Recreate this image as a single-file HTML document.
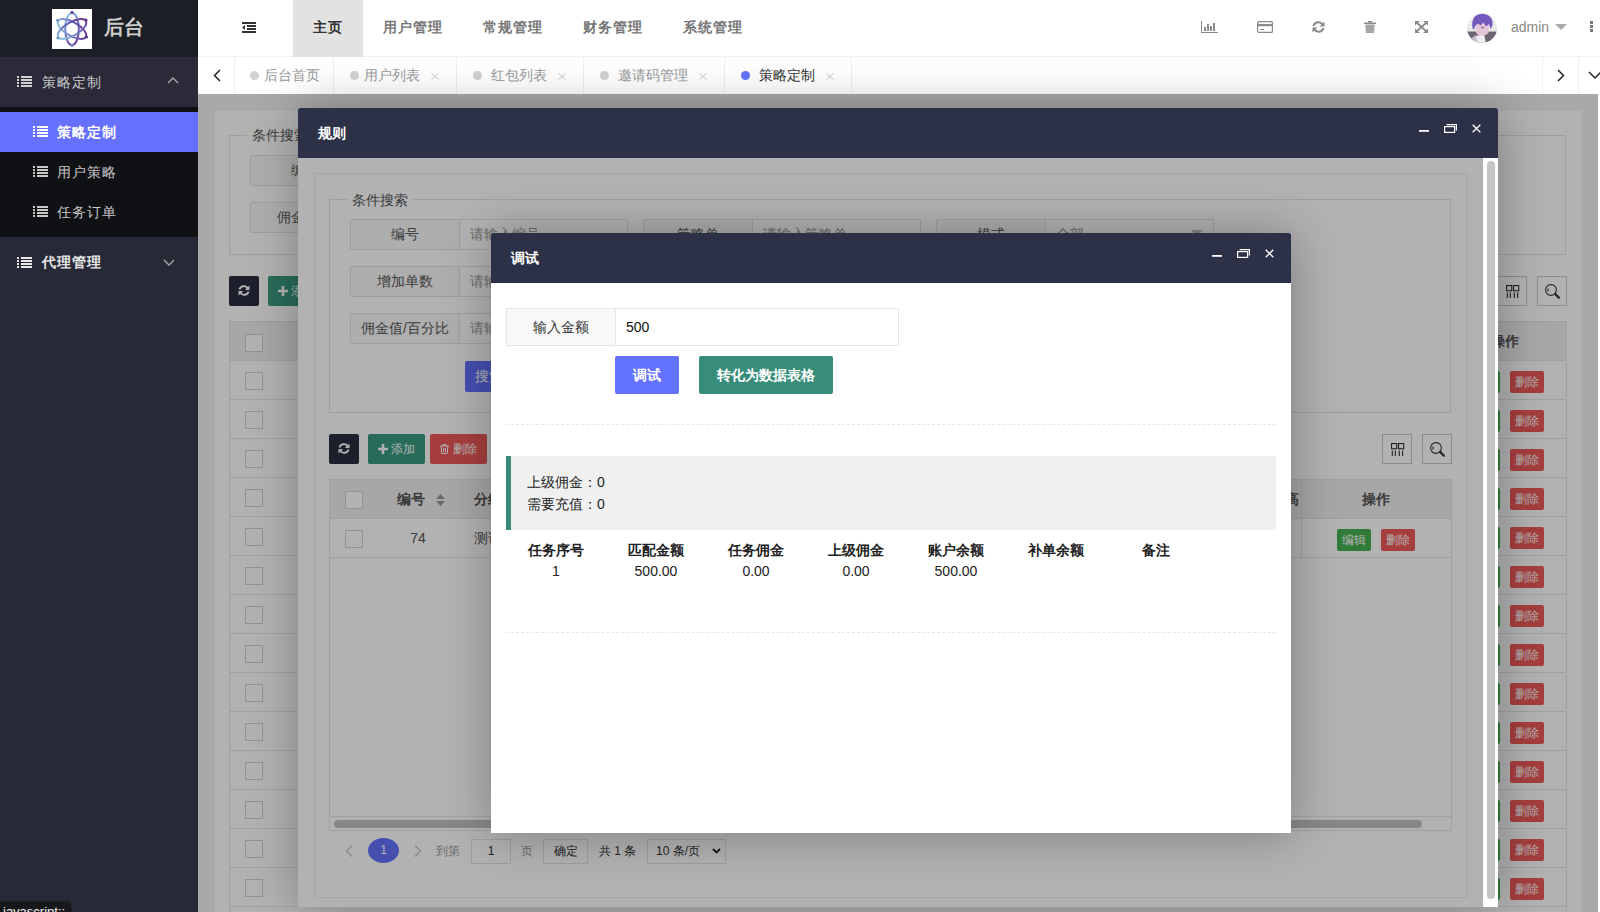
<!DOCTYPE html><html><head><meta charset="utf-8"><style>
*{box-sizing:border-box;margin:0;padding:0}
html,body{width:1600px;height:912px;overflow:hidden;background:#fff;font-family:"Liberation Sans",sans-serif;font-size:14px;color:#333}
.a{position:absolute}
#side{position:absolute;left:0;top:0;width:198px;height:912px;background:#282936}
#logo{position:absolute;left:0;top:0;width:198px;height:57px;background:#1c1e26}
#logo .box{position:absolute;left:52px;top:9px;width:40px;height:40px;background:#fff}
#logo .t{position:absolute;left:104px;top:14px;font-size:20px;line-height:26px;font-weight:900;color:#cdcdcd;letter-spacing:0px}
.mi{position:absolute;left:0;width:198px;color:#c4c4c4;font-size:14px;letter-spacing:1px}
.mi span{position:absolute;top:0}
.lic{position:absolute;width:15px;height:11px}
.lic i{position:absolute;left:0;height:2px;width:2px;background:currentColor}
.lic b{position:absolute;left:4px;height:2px;width:11px;background:currentColor}
#hdr{position:absolute;left:198px;top:0;width:1402px;height:57px;background:#fff;border-bottom:1px solid #f2f2f2}
.nav{position:absolute;top:0;height:57px;line-height:55px;font-size:14px;letter-spacing:1px;color:#777;font-weight:bold;text-align:center}
#tabs{position:absolute;left:198px;top:57px;width:1402px;height:37px;background:#fff}
.tab{position:absolute;top:0;height:37px;line-height:37px;border-right:1px solid #f0f0f0;color:#999;font-size:14px}
.tab .d{position:absolute;top:14px;width:9px;height:9px;border-radius:50%;background:#d2d2d2}
.tab .tx{position:absolute;top:0}
.tab .x{position:absolute;top:0;font-size:13px;color:#c8c8c8}
#main{position:absolute;left:198px;top:94px;width:1400px;height:818px;background:#f2f2f2;overflow:hidden}
.shade{position:absolute;left:0;top:0;right:0;bottom:0;background:rgba(0,0,0,.3)}
.card{position:absolute;background:#fff;border:1px solid #ececec;border-radius:2px}
.fs{position:absolute;border:1px solid #e2e2e2}
.lg{position:absolute;background:#fff;padding:0 5px;font-size:14px;color:#555;line-height:20px}
.lb{position:absolute;height:31px;border:1px solid #e2e2e2;background:#fafafa;line-height:29px;text-align:center;color:#555;border-radius:2px 0 0 2px}
.ip{position:absolute;height:31px;border:1px solid #e2e2e2;border-left:none;background:#fff;line-height:29px;padding-left:10px;color:#999;border-radius:0 2px 2px 0}
.btn{position:absolute;height:30px;line-height:30px;color:#fff;text-align:center;border-radius:2px;font-size:14px}
.ibtn{position:absolute;width:30px;height:30px;border:1px solid #cbcbcb;background:#fff}
.tbl{position:absolute;border:1px solid #e6e6e6;background:#fff}
.tr{position:absolute;left:0;right:0;height:39px;border-bottom:1px solid #e6e6e6}
.th{background:#efefef;font-weight:bold;color:#555}
.cb{position:absolute;width:18px;height:18px;border:1px solid #d2d2d2;background:#fff}
.sb{position:absolute;height:22px;line-height:22px;width:34px;font-size:12px;color:#fff;text-align:center;border-radius:2px}
.mod{position:absolute;background:#fff;border-radius:2px 2px 0 0;box-shadow:1px 1px 50px rgba(0,0,0,.3)}
.mtitle{position:absolute;left:0;top:0;right:0;height:50px;background:#2d3148;color:#fff;font-size:14px;font-weight:bold;line-height:50px;padding-left:20px;border-radius:2px 2px 0 0}
.ct{position:absolute;text-align:center;white-space:nowrap}
</style></head><body><div id="side"><div id="logo"><div class="box"><svg width="40" height="40" viewBox="0 0 40 40"><defs><linearGradient id="lg1" x1="0" y1="0.7" x2="1" y2="0.3"><stop offset="0" stop-color="#8cc4e8"/><stop offset="0.5" stop-color="#6a6fc0"/><stop offset="1" stop-color="#6a3596"/></linearGradient></defs>
<g fill="none" stroke="url(#lg1)" stroke-width="2">
<ellipse cx="20" cy="20" rx="16" ry="6.8" transform="rotate(90 20 20)"/>
<ellipse cx="20" cy="20" rx="16" ry="6.8" transform="rotate(30 20 20)"/>
<ellipse cx="20" cy="20" rx="16" ry="6.8" transform="rotate(-30 20 20)"/>
</g><g fill="#5a3a8a"><circle cx="20" cy="3.5" r="1.6"/><circle cx="34" cy="11" r="1.6"/><circle cx="34.5" cy="28" r="1.6"/></g><g fill="#6a9ab8"><circle cx="20" cy="36.5" r="1.6"/><circle cx="6" cy="29" r="1.6"/><circle cx="5.5" cy="11.5" r="1.4"/></g></svg></div><div class="t">后台</div></div><div class="a" style="left:0;top:57px;width:198px;height:50px;background:#2a2a38"></div><div class="lic" style="left:17px;top:76px;color:#cfcfcf"><i style="top:0px"></i><b style="top:0px"></b><i style="top:3px"></i><b style="top:3px"></b><i style="top:6px"></i><b style="top:6px"></b><i style="top:9px"></i><b style="top:9px"></b></div><div class="a" style="left:42px;top:72px;line-height:20px;color:#c8c8c8;letter-spacing:1px">策略定制</div><svg class="a" style="left:167px;top:76px" width="12" height="8" viewBox="0 0 12 8"><path d="M1 7 L6 2 L11 7" fill="none" stroke="#aaa" stroke-width="1.3"/></svg><div class="a" style="left:0;top:107px;width:198px;height:130px;background:#101115"></div><div class="a" style="left:0;top:112px;width:198px;height:40px;background:#6571fc"></div><div class="lic" style="left:33px;top:126px;color:#fff"><i style="top:0px"></i><b style="top:0px"></b><i style="top:3px"></i><b style="top:3px"></b><i style="top:6px"></i><b style="top:6px"></b><i style="top:9px"></i><b style="top:9px"></b></div><div class="a" style="left:57px;top:122px;line-height:20px;color:#fff;letter-spacing:1px;font-weight:bold">策略定制</div><div class="lic" style="left:33px;top:166px;color:#c8c8c8"><i style="top:0px"></i><b style="top:0px"></b><i style="top:3px"></i><b style="top:3px"></b><i style="top:6px"></i><b style="top:6px"></b><i style="top:9px"></i><b style="top:9px"></b></div><div class="a" style="left:57px;top:162px;line-height:20px;color:#c8c8c8;letter-spacing:1px;font-weight:normal">用户策略</div><div class="lic" style="left:33px;top:206px;color:#c8c8c8"><i style="top:0px"></i><b style="top:0px"></b><i style="top:3px"></i><b style="top:3px"></b><i style="top:6px"></i><b style="top:6px"></b><i style="top:9px"></i><b style="top:9px"></b></div><div class="a" style="left:57px;top:202px;line-height:20px;color:#c8c8c8;letter-spacing:1px;font-weight:normal">任务订单</div><div class="lic" style="left:17px;top:257px;color:#e8e8e8"><i style="top:0px"></i><b style="top:0px"></b><i style="top:3px"></i><b style="top:3px"></b><i style="top:6px"></i><b style="top:6px"></b><i style="top:9px"></i><b style="top:9px"></b></div><div class="a" style="left:42px;top:252px;line-height:20px;color:#e6e6e6;font-weight:bold;letter-spacing:1px">代理管理</div><svg class="a" style="left:163px;top:259px" width="12" height="8" viewBox="0 0 12 8"><path d="M1 1 L6 6 L11 1" fill="none" stroke="#aaa" stroke-width="1.3"/></svg></div><div id="hdr"><svg class="a" style="left:44px;top:22px" width="14" height="11" viewBox="0 0 14 11"><g fill="#333"><rect x="0" y="0" width="14" height="2"/><rect x="5" y="3" width="9" height="2"/><rect x="5" y="6" width="9" height="2"/><rect x="0" y="9" width="14" height="2"/><path d="M0 5.5 L3 3 L3 8 Z"/></g></svg><div class="nav" style="left:95px;width:70px;background:#e2e2e2;color:#333">主页</div><div class="nav" style="left:165px;width:100px">用户管理</div><div class="nav" style="left:265px;width:100px">常规管理</div><div class="nav" style="left:365px;width:100px">财务管理</div><div class="nav" style="left:465px;width:100px">系统管理</div><svg class="a" style="left:1003px;top:21px" width="17" height="12" viewBox="0 0 17 12"><g fill="#8a8a8a"><rect x="0" y="0" width="1" height="12"/><rect x="0" y="11" width="17" height="1"/><rect x="3" y="6" width="2" height="4"/><rect x="6" y="3" width="2" height="7"/><rect x="9" y="5" width="2" height="5"/><rect x="12" y="2" width="2" height="8"/></g></svg><svg class="a" style="left:1059px;top:21px" width="16" height="12" viewBox="0 0 16 12"><g fill="none" stroke="#8a8a8a" stroke-width="1.2"><rect x="0.6" y="0.6" width="14.8" height="10.8" rx="1"/></g><rect x="0.6" y="3" width="14.8" height="2.2" fill="#8a8a8a"/><rect x="3" y="8" width="4" height="1" fill="#8a8a8a"/></svg><svg class="a" style="left:1114px;top:21px" width="13" height="12" viewBox="0 0 13 12"><g fill="none" stroke="#8a8a8a" stroke-width="2"><path d="M1.5 5 A5 5 0 0 1 10.5 3.5"/><path d="M11.5 7 A5 5 0 0 1 2.5 8.5"/></g><path d="M12.5 0.5 L12.5 5.5 L7.5 5.5 Z" fill="#8a8a8a"/><path d="M0.5 11.5 L0.5 6.5 L5.5 6.5 Z" fill="#8a8a8a"/></svg><svg class="a" style="left:1166px;top:21px" width="12" height="12" viewBox="0 0 12 12"><g fill="#8a8a8a"><rect x="0" y="1.5" width="12" height="1.5"/><rect x="4" y="0" width="4" height="1.5"/><path d="M1.2 3.5 H10.8 L10 12 H2 Z" opacity="0.75"/></g></svg><svg class="a" style="left:1217px;top:21px" width="13" height="12" viewBox="0 0 13 12"><g fill="none" stroke="#8a8a8a" stroke-width="1.8"><path d="M2 2 L11 10"/><path d="M11 2 L2 10"/></g><g fill="#8a8a8a"><path d="M0 0 H5 L0 4.5 Z"/><path d="M13 0 H8 L13 4.5 Z"/><path d="M0 12 H5 L0 7.5 Z"/><path d="M13 12 H8 L13 7.5 Z"/></g></svg><div class="a" style="left:1269px;top:13px;width:30px;height:30px"><svg width="30" height="30" viewBox="0 0 30 30"><defs><clipPath id="avc"><circle cx="15" cy="15" r="15"/></clipPath></defs>
<g clip-path="url(#avc)"><rect width="30" height="30" fill="#f4f2f4"/>
<rect x="0" y="8" width="30" height="10.5" fill="#e9e8e4"/><rect x="0" y="10" width="30" height="1" fill="#f7f7f2"/><rect x="0" y="13" width="30" height="1" fill="#f7f7f2"/>
<path d="M0 18.5 H30 V30 H0 Z" fill="#6b6571"/>
<path d="M2 27 L9 22 L12 30 L2 30 Z" fill="#c9c0cf"/>
<path d="M9 23 L17 21 L19 30 L11 30 Z" fill="#f0ecf0"/>
<path d="M8 9 L22 9 L21.5 20 Q16 25 9.5 21 Z" fill="#e2c6d8"/>
<path d="M5.5 15 Q3.5 1.5 15 0.8 Q26.5 1.5 25.5 12.5 L23.5 16 L22 11 L19 13.5 L16.5 9.5 L13.5 12.5 L11 10.5 L8 13 L7 17 Z" fill="#7459bd"/>
<circle cx="15.5" cy="14.5" r="1.1" fill="#7a5f80"/></g></svg></div><div class="a" style="left:1313px;top:17px;line-height:20px;font-size:14px;color:#888">admin</div><svg class="a" style="left:1357px;top:24px" width="12" height="6" viewBox="0 0 12 6"><path d="M0 0 H12 L6 6 Z" fill="#aaa"/></svg><div class="a" style="left:1392px;top:21px;width:3px;height:11px"><div class="a" style="left:0;top:0;width:3px;height:3px;background:#777"></div><div class="a" style="left:0;top:4px;width:3px;height:3px;background:#777"></div><div class="a" style="left:0;top:8px;width:3px;height:3px;background:#777"></div></div></div><div id="tabs"><svg class="a" style="left:15px;top:12px" width="8" height="13" viewBox="0 0 8 13"><path d="M7 1 L1.5 6.5 L7 12" fill="none" stroke="#222" stroke-width="1.5"/></svg><div class="a" style="left:36px;top:0;width:1px;height:37px;background:#f0f0f0"></div><div class="tab" style="left:36px;width:100px"><div class="d" style="left:16px;background:#d2d2d2"></div><div class="tx" style="left:30px;color:#999">后台首页</div></div><div class="tab" style="left:136px;width:123px"><div class="d" style="left:16px;background:#d2d2d2"></div><div class="tx" style="left:30px;color:#999">用户列表</div><svg class="a" style="left:97px;top:16px" width="8" height="7" viewBox="0 0 8 7"><path d="M0.5 0.5 L7.5 6.5 M7.5 0.5 L0.5 6.5" stroke="#cacaca" stroke-width="1"/></svg></div><div class="tab" style="left:259px;width:127px"><div class="d" style="left:16px;background:#d2d2d2"></div><div class="tx" style="left:34px;color:#999">红包列表</div><svg class="a" style="left:101px;top:16px" width="8" height="7" viewBox="0 0 8 7"><path d="M0.5 0.5 L7.5 6.5 M7.5 0.5 L0.5 6.5" stroke="#cacaca" stroke-width="1"/></svg></div><div class="tab" style="left:386px;width:141px"><div class="d" style="left:16px;background:#d2d2d2"></div><div class="tx" style="left:34px;color:#999">邀请码管理</div><svg class="a" style="left:115px;top:16px" width="8" height="7" viewBox="0 0 8 7"><path d="M0.5 0.5 L7.5 6.5 M7.5 0.5 L0.5 6.5" stroke="#cacaca" stroke-width="1"/></svg></div><div class="tab" style="left:527px;width:127px"><div class="d" style="left:16px;background:#6272f6"></div><div class="tx" style="left:34px;color:#333">策略定制</div><svg class="a" style="left:101px;top:16px" width="8" height="7" viewBox="0 0 8 7"><path d="M0.5 0.5 L7.5 6.5 M7.5 0.5 L0.5 6.5" stroke="#cacaca" stroke-width="1"/></svg></div><div class="a" style="left:1344px;top:0;width:1px;height:37px;background:#f0f0f0"></div><svg class="a" style="left:1359px;top:12px" width="8" height="13" viewBox="0 0 8 13"><path d="M1 1 L6.5 6.5 L1 12" fill="none" stroke="#222" stroke-width="1.5"/></svg><div class="a" style="left:1380px;top:0;width:1px;height:37px;background:#f0f0f0"></div><svg class="a" style="left:1390px;top:14px" width="14" height="9" viewBox="0 0 14 9"><path d="M1 1 L7 7 L13 1" fill="none" stroke="#222" stroke-width="1.5"/></svg></div><div id="main"><div class="card" style="left:16px;top:16px;width:1369px;height:830px;border-color:#f4f4f4"></div><div class="fs" style="left:31px;top:41px;width:1337px;height:120px"></div><div class="lg" style="left:49px;top:31px">条件搜索</div><div class="lb" style="left:52px;top:61px;width:110px">编号</div><div class="ip" style="left:162px;top:61px;width:168px">请输入编号</div><div class="lb" style="left:52px;top:108px;width:110px">佣金模式</div><div class="ip" style="left:162px;top:108px;width:168px">请输入</div><div class="btn" style="left:31px;top:182px;width:30px;background:#2a2d40"><div class="a" style="left:9px;top:9px;line-height:0"><svg width="12" height="11" viewBox="0 0 13 12"><g fill="none" stroke="#fff" stroke-width="2"><path d="M1.5 5 A5 5 0 0 1 10.5 3.5"/><path d="M11.5 7 A5 5 0 0 1 2.5 8.5"/></g><path d="M12.5 0.5 L12.5 5.5 L7.5 5.5 Z" fill="#fff"/><path d="M0.5 11.5 L0.5 6.5 L5.5 6.5 Z" fill="#fff"/></svg></div></div><div class="btn" style="left:70px;top:182px;width:57px;background:#3a9a80;text-align:left"><div class="a" style="left:10px;top:10px;line-height:0"><svg width="10" height="10" viewBox="0 0 10 10"><path d="M3.7 0 H6.3 V3.7 H10 V6.3 H6.3 V10 H3.7 V6.3 H0 V3.7 H3.7 Z" fill="#fff"/></svg></div><div class="a" style="left:23px;top:0;font-size:12px">添加</div></div><div class="ibtn" style="left:1299px;top:182px"><div class="a" style="left:8px;top:8px;line-height:0"><svg width="14" height="14" viewBox="0 0 14 14"><g fill="none" stroke="#333" stroke-width="1.1"><rect x="0.55" y="0.55" width="5.2" height="5.2"/><rect x="7.55" y="0.55" width="5.2" height="5.2"/><path d="M1.3 7.5 V13 M4.3 7.5 V13 M8.3 7.5 V13 M11.6 7.5 V13"/></g></svg></div></div><div class="ibtn" style="left:1339px;top:182px"><div class="a" style="left:7px;top:7px;line-height:0"><svg width="16" height="16" viewBox="0 0 16 16"><g fill="none" stroke="#333" stroke-width="1.1"><circle cx="6" cy="6" r="5.4"/><path d="M3.3 4.5 A3 3 0 0 0 3.3 7.5"/><path d="M10 9.8 L13.8 13.6" stroke-width="2.2" stroke-linecap="round"/></g></svg></div></div><div class="tbl" style="left:31px;top:227px;width:1338px;height:700px"><div class="tr th" style="top:0"></div><div class="cb" style="left:15px;top:12px"></div><div class="ct" style="left:1225px;width:100px;top:0;line-height:39px;font-weight:bold;color:#555">操作</div><div class="tr" style="top:39px"></div><div class="cb" style="left:15px;top:50px"></div><div class="sb" style="left:1236px;top:49px;background:#45b04f">编辑</div><div class="sb" style="left:1280px;top:49px;background:#ee5a5a">删除</div><div class="tr" style="top:78px"></div><div class="cb" style="left:15px;top:89px"></div><div class="sb" style="left:1236px;top:88px;background:#45b04f">编辑</div><div class="sb" style="left:1280px;top:88px;background:#ee5a5a">删除</div><div class="tr" style="top:117px"></div><div class="cb" style="left:15px;top:128px"></div><div class="sb" style="left:1236px;top:127px;background:#45b04f">编辑</div><div class="sb" style="left:1280px;top:127px;background:#ee5a5a">删除</div><div class="tr" style="top:156px"></div><div class="cb" style="left:15px;top:167px"></div><div class="sb" style="left:1236px;top:166px;background:#45b04f">编辑</div><div class="sb" style="left:1280px;top:166px;background:#ee5a5a">删除</div><div class="tr" style="top:195px"></div><div class="cb" style="left:15px;top:206px"></div><div class="sb" style="left:1236px;top:205px;background:#45b04f">编辑</div><div class="sb" style="left:1280px;top:205px;background:#ee5a5a">删除</div><div class="tr" style="top:234px"></div><div class="cb" style="left:15px;top:245px"></div><div class="sb" style="left:1236px;top:244px;background:#45b04f">编辑</div><div class="sb" style="left:1280px;top:244px;background:#ee5a5a">删除</div><div class="tr" style="top:273px"></div><div class="cb" style="left:15px;top:284px"></div><div class="sb" style="left:1236px;top:283px;background:#45b04f">编辑</div><div class="sb" style="left:1280px;top:283px;background:#ee5a5a">删除</div><div class="tr" style="top:312px"></div><div class="cb" style="left:15px;top:323px"></div><div class="sb" style="left:1236px;top:322px;background:#45b04f">编辑</div><div class="sb" style="left:1280px;top:322px;background:#ee5a5a">删除</div><div class="tr" style="top:351px"></div><div class="cb" style="left:15px;top:362px"></div><div class="sb" style="left:1236px;top:361px;background:#45b04f">编辑</div><div class="sb" style="left:1280px;top:361px;background:#ee5a5a">删除</div><div class="tr" style="top:390px"></div><div class="cb" style="left:15px;top:401px"></div><div class="sb" style="left:1236px;top:400px;background:#45b04f">编辑</div><div class="sb" style="left:1280px;top:400px;background:#ee5a5a">删除</div><div class="tr" style="top:429px"></div><div class="cb" style="left:15px;top:440px"></div><div class="sb" style="left:1236px;top:439px;background:#45b04f">编辑</div><div class="sb" style="left:1280px;top:439px;background:#ee5a5a">删除</div><div class="tr" style="top:468px"></div><div class="cb" style="left:15px;top:479px"></div><div class="sb" style="left:1236px;top:478px;background:#45b04f">编辑</div><div class="sb" style="left:1280px;top:478px;background:#ee5a5a">删除</div><div class="tr" style="top:507px"></div><div class="cb" style="left:15px;top:518px"></div><div class="sb" style="left:1236px;top:517px;background:#45b04f">编辑</div><div class="sb" style="left:1280px;top:517px;background:#ee5a5a">删除</div><div class="tr" style="top:546px"></div><div class="cb" style="left:15px;top:557px"></div><div class="sb" style="left:1236px;top:556px;background:#45b04f">编辑</div><div class="sb" style="left:1280px;top:556px;background:#ee5a5a">删除</div><div class="tr" style="top:585px"></div><div class="cb" style="left:15px;top:596px"></div><div class="sb" style="left:1236px;top:595px;background:#45b04f">编辑</div><div class="sb" style="left:1280px;top:595px;background:#ee5a5a">删除</div></div><div class="shade"></div></div><div class="mod" style="left:298px;top:108px;width:1200px;height:799px"><div class="mtitle">规则</div><svg class="a" style="left:1121px;top:22px" width="10" height="2" viewBox="0 0 10 2"><rect x="0" y="0" width="10" height="1.8" fill="#fff"/></svg><svg class="a" style="left:1146px;top:16px" width="13" height="9" viewBox="0 0 13 9"><g fill="none" stroke="#fff" stroke-width="1.2"><rect x="0.6" y="2.6" width="10" height="5.8"/><path d="M2.6 0.6 H12.4 V6.4"/></g></svg><svg class="a" style="left:1174px;top:16px" width="9" height="9" viewBox="0 0 9 9"><path d="M0.7 0.7 L8.3 8.3 M8.3 0.7 L0.7 8.3" stroke="#fff" stroke-width="1.3"/></svg><div class="a" style="left:0;top:50px;width:1200px;height:749px;overflow:hidden;background:#fff"><div class="a" style="left:0;top:0;width:1185px;height:749px;background:#fff;overflow:hidden"><div class="card" style="left:16px;top:15px;width:1154px;height:725px"></div><div class="fs" style="left:31px;top:41px;width:1122px;height:214px"></div><div class="lg" style="left:49px;top:32px">条件搜索</div><div class="lb" style="left:52px;top:61px;width:110px">编号</div><div class="ip" style="left:162px;top:61px;width:168px">请输入编号</div><div class="lb" style="left:345px;top:61px;width:110px">策略单</div><div class="ip" style="left:455px;top:61px;width:168px">请输入策略单</div><div class="lb" style="left:638px;top:61px;width:110px">模式</div><div class="ip" style="left:748px;top:61px;width:168px">全部</div><svg class="a" style="left:893px;top:72px" width="12" height="7" viewBox="0 0 12 7"><path d="M0 0 H12 L6 7 Z" fill="#c2c2c2"/></svg><div class="lb" style="left:52px;top:108px;width:110px">增加单数</div><div class="ip" style="left:162px;top:108px;width:168px">请输入</div><div class="lb" style="left:52px;top:155px;width:110px">佣金值/百分比</div><div class="ip" style="left:162px;top:155px;width:168px">请输入</div><div class="btn" style="left:167px;top:203px;width:70px;height:31px;line-height:31px;background:#6372fd;text-align:left;padding-left:10px">搜索</div><div class="btn" style="left:31px;top:276px;width:30px;background:#2a2d40"><div class="a" style="left:9px;top:9px;line-height:0"><svg width="12" height="11" viewBox="0 0 13 12"><g fill="none" stroke="#fff" stroke-width="2"><path d="M1.5 5 A5 5 0 0 1 10.5 3.5"/><path d="M11.5 7 A5 5 0 0 1 2.5 8.5"/></g><path d="M12.5 0.5 L12.5 5.5 L7.5 5.5 Z" fill="#fff"/><path d="M0.5 11.5 L0.5 6.5 L5.5 6.5 Z" fill="#fff"/></svg></div></div><div class="btn" style="left:70px;top:276px;width:57px;background:#3a9a80;text-align:left"><div class="a" style="left:10px;top:10px;line-height:0"><svg width="10" height="10" viewBox="0 0 10 10"><path d="M3.7 0 H6.3 V3.7 H10 V6.3 H6.3 V10 H3.7 V6.3 H0 V3.7 H3.7 Z" fill="#fff"/></svg></div><div class="a" style="left:23px;top:0;font-size:12px">添加</div></div><div class="btn" style="left:132px;top:276px;width:57px;background:#ee5a5a;text-align:left"><div class="a" style="left:10px;top:10px;line-height:0"><svg width="9" height="10" viewBox="0 0 9 10"><g fill="none" stroke="#fff" stroke-width="1"><path d="M0 2 H9"/><path d="M3 2 V0.5 H6 V2"/><path d="M1.2 2 L1.7 9.5 H7.3 L7.8 2"/><path d="M3.6 4 V8 M5.4 4 V8"/></g></svg></div><div class="a" style="left:23px;top:0;font-size:12px">删除</div></div><div class="ibtn" style="left:1084px;top:276px"><div class="a" style="left:8px;top:8px;line-height:0"><svg width="14" height="14" viewBox="0 0 14 14"><g fill="none" stroke="#333" stroke-width="1.1"><rect x="0.55" y="0.55" width="5.2" height="5.2"/><rect x="7.55" y="0.55" width="5.2" height="5.2"/><path d="M1.3 7.5 V13 M4.3 7.5 V13 M8.3 7.5 V13 M11.6 7.5 V13"/></g></svg></div></div><div class="ibtn" style="left:1124px;top:276px"><div class="a" style="left:7px;top:7px;line-height:0"><svg width="16" height="16" viewBox="0 0 16 16"><g fill="none" stroke="#333" stroke-width="1.1"><circle cx="6" cy="6" r="5.4"/><path d="M3.3 4.5 A3 3 0 0 0 3.3 7.5"/><path d="M10 9.8 L13.8 13.6" stroke-width="2.2" stroke-linecap="round"/></g></svg></div></div><div class="tbl" style="left:31px;top:321px;width:1123px;height:352px"><div class="tr th" style="top:0"></div><div class="cb" style="left:15px;top:11px"></div><div class="ct" style="left:41px;width:80px;top:0;line-height:38px;font-weight:bold;color:#555">编号</div><div class="a" style="left:106px;top:14px;line-height:0"><svg width="9" height="12" viewBox="0 0 9 12"><path d="M4.5 0 L9 5 H0 Z M0 7 H9 L4.5 12 Z" fill="#999"/></svg></div><div class="a" style="left:144px;top:0;line-height:38px;font-weight:bold;color:#555">分组</div><div class="a" style="left:144px;top:39px;line-height:39px;color:#555">测试</div><div class="ct" style="left:971px;width:150px;top:0;line-height:38px;font-weight:bold;color:#555">操作</div><div class="a" style="left:941px;top:0;line-height:38px;font-weight:bold;color:#555">最高</div><div class="a" style="left:971px;top:0;width:1px;height:78px;background:#e6e6e6"></div><div class="tr" style="top:39px"></div><div class="cb" style="left:15px;top:50px"></div><div class="ct" style="left:48px;width:80px;top:39px;line-height:39px;color:#555">74</div><div class="sb" style="left:1007px;top:49px;background:#45b04f">编辑</div><div class="sb" style="left:1051px;top:49px;background:#ee5a5a">删除</div><div class="a" style="left:0;top:336px;width:1121px;height:1px;background:#e6e6e6"></div><div class="a" style="left:4px;top:340px;width:1088px;height:8px;border-radius:4px;background:#c2c2c2"></div></div><svg class="a" style="left:47px;top:687px" width="8" height="12" viewBox="0 0 8 12"><path d="M7 0.5 L1.5 6 L7 11.5" fill="none" stroke="#c2c2c2" stroke-width="1.2"/></svg><svg class="a" style="left:116px;top:687px" width="8" height="12" viewBox="0 0 8 12"><path d="M1 0.5 L6.5 6 L1 11.5" fill="none" stroke="#c2c2c2" stroke-width="1.2"/></svg><svg class="a" style="left:414px;top:690px" width="9" height="6" viewBox="0 0 9 6"><path d="M1 1 L4.5 4.5 L8 1" fill="none" stroke="#222" stroke-width="1.8"/></svg><div class="a" style="left:70px;top:680px;width:31px;height:25px;border-radius:50%;background:#6372fd;color:#fff;text-align:center;line-height:25px;font-size:12px">1</div><div class="a" style="left:138px;top:683px;font-size:12px;color:#999;line-height:20px">到第</div><div class="a" style="left:173px;top:681px;width:40px;height:25px;border:1px solid #e2e2e2;text-align:center;line-height:23px;font-size:12px">1</div><div class="a" style="left:223px;top:683px;font-size:12px;color:#999;line-height:20px">页</div><div class="a" style="left:245px;top:681px;width:45px;height:25px;border:1px solid #e2e2e2;text-align:center;line-height:23px;font-size:12px">确定</div><div class="a" style="left:301px;top:683px;font-size:12px;line-height:20px">共 1 条</div><div class="a" style="left:349px;top:681px;width:79px;height:25px;border:1px solid #e2e2e2;line-height:23px;font-size:12px;padding-left:8px">10 条/页</div><div class="shade"></div></div><div class="a" style="left:1189px;top:3px;width:8px;height:738px;border-radius:4px;background:#c4c4c4"></div></div></div><div class="mod" style="left:491px;top:233px;width:800px;height:600px"><div class="mtitle">调试</div><svg class="a" style="left:721px;top:22px" width="10" height="2" viewBox="0 0 10 2"><rect x="0" y="0" width="10" height="1.8" fill="#fff"/></svg><svg class="a" style="left:746px;top:16px" width="13" height="9" viewBox="0 0 13 9"><g fill="none" stroke="#fff" stroke-width="1.2"><rect x="0.6" y="2.6" width="10" height="5.8"/><path d="M2.6 0.6 H12.4 V6.4"/></g></svg><svg class="a" style="left:774px;top:16px" width="9" height="9" viewBox="0 0 9 9"><path d="M0.7 0.7 L8.3 8.3 M8.3 0.7 L0.7 8.3" stroke="#fff" stroke-width="1.3"/></svg><div class="a" style="left:15px;top:75px;width:110px;height:38px;border:1px solid #e6e6e6;background:#f8f8f8;text-align:center;line-height:36px;color:#333">输入金额</div><div class="a" style="left:124px;top:75px;width:284px;height:38px;border:1px solid #e6e6e6;background:#fff;line-height:36px;padding-left:10px;color:#111">500</div><div class="btn" style="left:124px;top:123px;width:64px;height:38px;line-height:38px;background:#6372fd;font-weight:bold">调试</div><div class="btn" style="left:208px;top:123px;width:134px;height:38px;line-height:38px;background:#388c7a;font-weight:bold">转化为数据表格</div><div class="a" style="left:15px;top:191px;width:770px;border-top:1px dashed #e6e6e6"></div><div class="a" style="left:15px;top:223px;width:770px;height:74px;background:#f0f0f0;border-left:5px solid #388c7a"></div><div class="a" style="left:36px;top:238px;line-height:22px;color:#222">上级佣金：0<br>需要充值：0</div><div class="ct" style="left:15px;width:100px;top:306px;line-height:22px;font-weight:bold;color:#222">任务序号</div><div class="ct" style="left:15px;width:100px;top:327px;line-height:22px;color:#222">1</div><div class="ct" style="left:115px;width:100px;top:306px;line-height:22px;font-weight:bold;color:#222">匹配金额</div><div class="ct" style="left:115px;width:100px;top:327px;line-height:22px;color:#222">500.00</div><div class="ct" style="left:215px;width:100px;top:306px;line-height:22px;font-weight:bold;color:#222">任务佣金</div><div class="ct" style="left:215px;width:100px;top:327px;line-height:22px;color:#222">0.00</div><div class="ct" style="left:315px;width:100px;top:306px;line-height:22px;font-weight:bold;color:#222">上级佣金</div><div class="ct" style="left:315px;width:100px;top:327px;line-height:22px;color:#222">0.00</div><div class="ct" style="left:415px;width:100px;top:306px;line-height:22px;font-weight:bold;color:#222">账户余额</div><div class="ct" style="left:415px;width:100px;top:327px;line-height:22px;color:#222">500.00</div><div class="ct" style="left:515px;width:100px;top:306px;line-height:22px;font-weight:bold;color:#222">补单余额</div><div class="ct" style="left:515px;width:100px;top:327px;line-height:22px;color:#222"></div><div class="ct" style="left:615px;width:100px;top:306px;line-height:22px;font-weight:bold;color:#222">备注</div><div class="ct" style="left:615px;width:100px;top:327px;line-height:22px;color:#222"></div><div class="a" style="left:15px;top:399px;width:770px;border-top:1px dashed #e6e6e6"></div></div><div class="a" style="left:-1px;top:901px;width:73px;height:16px;padding:0 0 0 4px;background:#17181c;border-top:1px solid #202126;border-right:1px solid #222328;border-radius:0 4px 0 0;color:#f0f0f0;font-size:13px;line-height:20px">javascript:;</div></body></html>
